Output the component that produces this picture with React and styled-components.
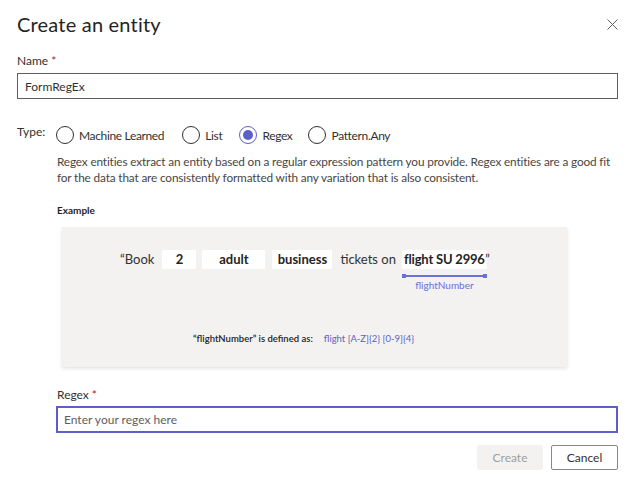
import React from "react";
import styled, { createGlobalStyle } from "styled-components";

const Global = createGlobalStyle`
  html, body { margin: 0; padding: 0; background: #fff; }
  body { font-family: "Segoe UI", Lato, "Open Sans", sans-serif; color: #323130; }
  * { box-sizing: border-box; }
`;

const Dialog = styled.div`
  width: 638px;
  height: 489px;
  padding: 12px 20px 0 17px;
  display: flex;
  flex-direction: column;
`;

const Header = styled.div`
  display: flex;
  align-items: center;
  justify-content: space-between;
  height: 24px;
`;

const Title = styled.h1`
  margin: 0;
  font-size: 20px;
  font-weight: 400;
  color: #252423;
  letter-spacing: 0.2px;
`;

const Close = styled.button`
  border: 0;
  background: none;
  padding: 0;
  width: 11px;
  height: 11px;
  margin-top: 1px;
  display: flex;
`;

const Label = styled.label`
  display: block;
  font-size: 12px;
  line-height: 16px;
  color: #323130;
  margin-top: ${(p) => p.$mt || 0}px;
  margin-left: ${(p) => p.$ml || 0}px;
`;

const Req = styled.span`
  color: #a4262c;
  margin-left: 3px;
`;

const Input = styled.input`
  display: block;
  width: calc(100% - ${(p) => p.$indent || 0}px);
  margin-left: ${(p) => p.$indent || 0}px;
  height: ${(p) => (p.$focused ? 27 : 26)}px;
  margin-top: ${(p) => (p.$focused ? 3 : 4)}px;
  border: ${(p) => (p.$focused ? "2px solid #5b5fc7" : "1px solid #605e5c")};
  padding: 0 ${(p) => (p.$focused ? 6 : 7)}px;
  font-family: inherit;
  font-size: 12px;
  color: #323130;
  outline: none;
  &::placeholder { color: #605e5c; }
`;

const TypeRow = styled.div`
  display: flex;
  align-items: center;
  margin-top: 26px;
  height: 20px;
`;

const TypeLabel = styled.span`
  font-size: 12px;
  color: #323130;
  width: 39px;
  align-self: flex-start;
  margin-top: -1px;
`;

const RadioOption = styled.label`
  display: flex;
  align-items: center;
  gap: 5px;
  font-size: 12px;
  letter-spacing: -0.35px;
  color: #323130;
  margin-right: ${(p) => p.$gap}px;
`;

const RadioCircle = styled.span`
  width: 18px;
  height: 18px;
  border-radius: 50%;
  border: 1px solid ${(p) => (p.$checked ? "#5b5fc7" : "#323130")};
  display: flex;
  align-items: center;
  justify-content: center;
  &::after {
    content: "";
    width: 10px;
    height: 10px;
    border-radius: 50%;
    background: ${(p) => (p.$checked ? "#5b5fc7" : "transparent")};
  }
`;

const Body = styled.div`
  margin-left: 40px;
  display: flex;
  flex-direction: column;
`;

const Description = styled.p`
  margin: 9px 0 0;
  font-size: 11.8px;
  line-height: 16px;
  letter-spacing: -0.15px;
  color: #484644;
  white-space: nowrap;
`;

const ExampleLabel = styled.div`
  margin-top: 18px;
  font-size: 10px;
  font-weight: 700;
  color: #252423;
`;

const Card = styled.div`
  margin: 11px 0 0 5px;
  width: 505px;
  height: 140px;
  background: #f3f2f1;
  box-shadow: 0 1.6px 3.6px rgba(0, 0, 0, 0.13), 0 0.3px 0.9px rgba(0, 0, 0, 0.11);
  display: flex;
  flex-direction: column;
  align-items: flex-start;
`;

const Sentence = styled.div`
  margin-top: 23px;
  padding-left: 58px;
  display: flex;
  align-items: flex-start;
  font-size: 13px;
  color: #323130;
`;

const Plain = styled.span`
  height: 19px;
  line-height: 19px;
  margin-right: ${(p) => p.$mr || 0}px;
  margin-left: ${(p) => p.$ml || 0}px;
`;

const Chip = styled.span`
  height: 19px;
  line-height: 19px;
  background: #fff;
  font-weight: 700;
  color: #252423;
  width: ${(p) => p.$w}px;
  text-align: center;
  margin-right: ${(p) => p.$mr || 0}px;
`;

const Tagged = styled.span`
  display: flex;
  flex-direction: column;
  align-items: stretch;
  width: 85px;
`;

const TagChip = styled.span`
  height: 19px;
  line-height: 19px;
  background: #fff;
  font-weight: 700;
  color: #252423;
  text-align: center;
  white-space: nowrap;
  letter-spacing: -0.2px;
`;

const TagBar = styled.span`
  margin-top: 6px;
  height: 2px;
  background: #6b70d6;
  position: relative;
  &::before, &::after {
    content: "";
    position: absolute;
    top: -1px;
    width: 4px;
    height: 4px;
    background: #6b70d6;
  }
  &::before { left: 0; }
  &::after { right: 0; }
`;

const TagName = styled.span`
  margin-top: 2px;
  font-size: 10px;
  color: #6b70d6;
  text-align: center;
`;

const Definition = styled.div`
  margin-top: 42px;
  padding-left: 131px;
  font-size: 9.5px;
  display: flex;
  gap: 11px;
`;

const DefKey = styled.span`
  color: #252423;
  font-weight: 600;
`;

const DefValue = styled.span`
  color: #5b5fc7;
`;

const Footer = styled.div`
  margin-top: 12px;
  display: flex;
  justify-content: flex-end;
  gap: 8px;
`;

const Button = styled.button`
  height: 25px;
  width: ${(p) => p.$w}px;
  font-family: inherit;
  font-size: 12px;
  background: ${(p) => (p.$disabled ? "#f3f2f1" : "#fff")};
  color: ${(p) => (p.$disabled ? "#a19f9d" : "#323130")};
  border: 1px solid ${(p) => (p.$disabled ? "#f3f2f1" : "#8a8886")};
  border-radius: 2px;
  padding: 0;
`;

const radios = [
  { label: "Machine Learned", gap: 18 },
  { label: "List", gap: 17 },
  { label: "Regex", gap: 16, checked: true },
  { label: "Pattern.Any", gap: 0 },
];

export default function App() {
  return (
    <>
      <Global />
      <Dialog>
        <Header>
          <Title>Create an entity</Title>
          <Close aria-label="Close">
            <svg width="11" height="11" viewBox="0 0 11 11">
              <path d="M0.5 0.5 L10.5 10.5 M10.5 0.5 L0.5 10.5" stroke="#605e5c" strokeWidth="1" fill="none" />
            </svg>
          </Close>
        </Header>

        <Label $mt={17}>
          Name<Req>*</Req>
        </Label>
        <Input defaultValue="FormRegEx" />

        <TypeRow>
          <TypeLabel>Type:</TypeLabel>
          {radios.map((r) => (
            <RadioOption key={r.label} $gap={r.gap}>
              <RadioCircle $checked={r.checked} />
              {r.label}
            </RadioOption>
          ))}
        </TypeRow>

        <Body>
          <Description>
            Regex entities extract an entity based on a regular expression pattern you provide. Regex entities are a good fit
            <br />
            for the data that are consistently formatted with any variation that is also consistent.
          </Description>
          <ExampleLabel>Example</ExampleLabel>
          <Card>
            <Sentence>
              <Plain $mr={8}>“Book</Plain>
              <Chip $w={34} $mr={6}>2</Chip>
              <Chip $w={63} $mr={7}>adult</Chip>
              <Chip $w={60} $mr={8}>business</Chip>
              <Plain $mr={6}>tickets on</Plain>
              <Tagged>
                <TagChip>flight SU 2996</TagChip>
                <TagBar />
                <TagName>flightNumber</TagName>
              </Tagged>
              <Plain $ml={-2}>”</Plain>
            </Sentence>
            <Definition>
              <DefKey>“flightNumber” is defined as:</DefKey>
              <DefValue>flight [A-Z]{"{2}"} [0-9]{"{4}"}</DefValue>
            </Definition>
          </Card>
        </Body>

        <Label $mt={20} $ml={40}>
          Regex<Req>*</Req>
        </Label>
        <Input $indent={39} $focused placeholder="Enter your regex here" />

        <Footer>
          <Button $w={66} $disabled>Create</Button>
          <Button $w={67}>Cancel</Button>
        </Footer>
      </Dialog>
    </>
  );
}
